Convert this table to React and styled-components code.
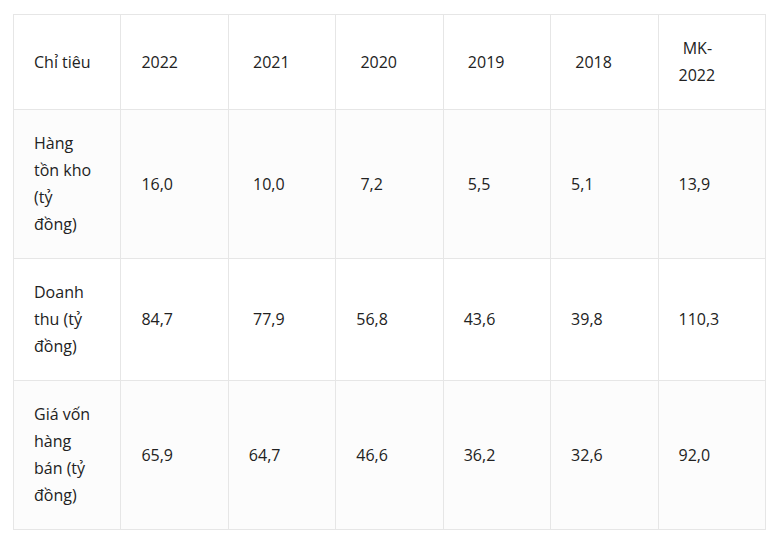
import React from 'react';
import styled, { createGlobalStyle } from 'styled-components';

const NB = '\u00a0';

const HEADERS = ['Chỉ tiêu', '2022', `${NB}2021`, `${NB}2020`, `${NB}2019`, `${NB}2018`, `${NB}MK-2022`];

const ROWS = [
  ['Hàng tồn kho (tỷ đồng)', '16,0', `${NB}10,0`, `${NB}7,2`, `${NB}5,5`, '5,1', '13,9'],
  ['Doanh thu (tỷ đồng)', '84,7', `${NB}77,9`, '56,8', '43,6', '39,8', '110,3'],
  ['Giá vốn hàng bán (tỷ đồng)', '65,9', '64,7', '46,6', '36,2', '32,6', '92,0']
];

const GlobalStyle = createGlobalStyle`
  html, body {
    margin: 0;
    padding: 0;
    background: #fff;
  }
  body {
    font-family: "Open Sans", "Noto Sans", sans-serif;
    color: #222;
  }
`;

const Page = styled.div`
  padding: 14px 18px 0 13px;
`;

const Table = styled.table`
  width: 753px;
  table-layout: fixed;
  border-collapse: collapse;
  font-size: 16px;
  line-height: 27px;
`;

const Row = styled.tr`
  background: ${(p) => (p.$shaded ? '#fcfcfc' : '#fff')};
`;

const Cell = styled.td`
  border: 1px solid #e6e6e6;
  padding: 20px 23px 20px 20px;
  vertical-align: middle;
  text-align: left;
  font-weight: 400;
  word-wrap: break-word;
`;

export default function App() {
  return (
    <Page>
      <GlobalStyle />
      <Table>
        <tbody>
          <Row>
            {HEADERS.map((h, i) => (
              <Cell key={i}>{h}</Cell>
            ))}
          </Row>
          {ROWS.map((row, r) => (
            <Row key={r} $shaded={r % 2 === 0}>
              {row.map((v, i) => (
                <Cell key={i}>{v}</Cell>
              ))}
            </Row>
          ))}
        </tbody>
      </Table>
    </Page>
  );
}
